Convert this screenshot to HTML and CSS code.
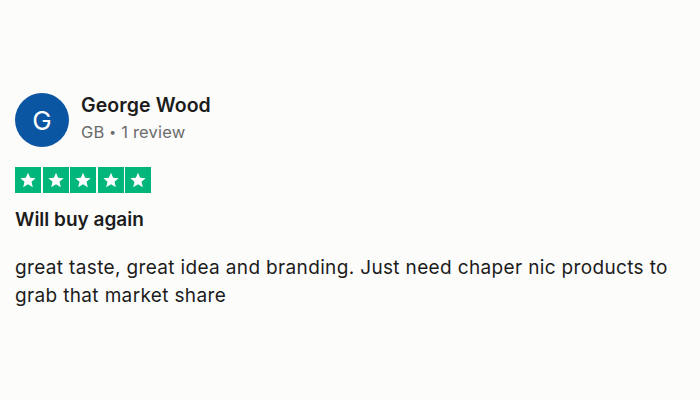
FILE: index.html
```html
<!DOCTYPE html>
<html>
<head>
<meta charset="utf-8">
<link rel="stylesheet" href="styles.css">
</head>
<body>
<div class="review">
  <div class="header">
    <div class="avatar">G</div>
    <div class="meta">
      <div class="name">George Wood</div>
      <div class="sub">GB <span class="dot">•</span> 1 review</div>
    </div>
  </div>
  <div class="stars">
    <span class="star"><svg viewBox="0 0 24 24"><path d="M12 3.2l2.6 6.1 6.6.5-5 4.3 1.6 6.5L12 17.1l-5.8 3.5 1.6-6.5-5-4.3 6.6-.5z" fill="#fff"/></svg></span>
    <span class="star"><svg viewBox="0 0 24 24"><path d="M12 3.2l2.6 6.1 6.6.5-5 4.3 1.6 6.5L12 17.1l-5.8 3.5 1.6-6.5-5-4.3 6.6-.5z" fill="#fff"/></svg></span>
    <span class="star"><svg viewBox="0 0 24 24"><path d="M12 3.2l2.6 6.1 6.6.5-5 4.3 1.6 6.5L12 17.1l-5.8 3.5 1.6-6.5-5-4.3 6.6-.5z" fill="#fff"/></svg></span>
    <span class="star"><svg viewBox="0 0 24 24"><path d="M12 3.2l2.6 6.1 6.6.5-5 4.3 1.6 6.5L12 17.1l-5.8 3.5 1.6-6.5-5-4.3 6.6-.5z" fill="#fff"/></svg></span>
    <span class="star"><svg viewBox="0 0 24 24"><path d="M12 3.2l2.6 6.1 6.6.5-5 4.3 1.6 6.5L12 17.1l-5.8 3.5 1.6-6.5-5-4.3 6.6-.5z" fill="#fff"/></svg></span>
  </div>
  <h2 class="title">Will buy again</h2>
  <p class="text">great taste, great idea and branding. Just need chaper nic products to grab that market share</p>
</div>
</body>
</html>
```
FILE: styles.css
```css
html, body {
  margin: 0;
  padding: 0;
  background: #fcfcfb;
}
body {
  width: 700px;
  height: 400px;
  font-family: Inter, "Liberation Sans", sans-serif;
  color: #1c1c1c;
}
.review {
  padding: 93px 15px 0 15px;
}
.header {
  display: flex;
  align-items: center;
  gap: 12px;
}
.avatar {
  width: 54px;
  height: 54px;
  border-radius: 50%;
  background: #0b56a2;
  color: #fff;
  display: flex;
  align-items: center;
  justify-content: center;
  font-size: 26px;
  font-weight: 400;
}
.meta {
  display: flex;
  flex-direction: column;
  gap: 6px;
  margin-top: -4px;
}
.name {
  font-size: 19.5px;
  font-weight: 600;
  line-height: 22px;
  letter-spacing: 0.1px;
}
.sub {
  font-size: 16.5px;
  line-height: 20px;
  color: #6b6b6b;
  letter-spacing: 0.2px;
}
.dot {
  font-size: 12px;
  vertical-align: 2px;
}
.stars {
  display: flex;
  gap: 1.5px;
  margin-top: 20px;
}
.star {
  width: 26px;
  height: 26px;
  background: #00b67a;
  display: flex;
  align-items: center;
  justify-content: center;
}
.star svg {
  width: 20px;
  height: 20px;
}
.title {
  margin: 15px 0 0 0;
  font-size: 19px;
  font-weight: 600;
  line-height: 24px;
  letter-spacing: 0px;
}
.text {
  margin: 22px 0 0 0;
  font-size: 19px;
  line-height: 28px;
  letter-spacing: 0.35px;
  max-width: 670px;
}
```
